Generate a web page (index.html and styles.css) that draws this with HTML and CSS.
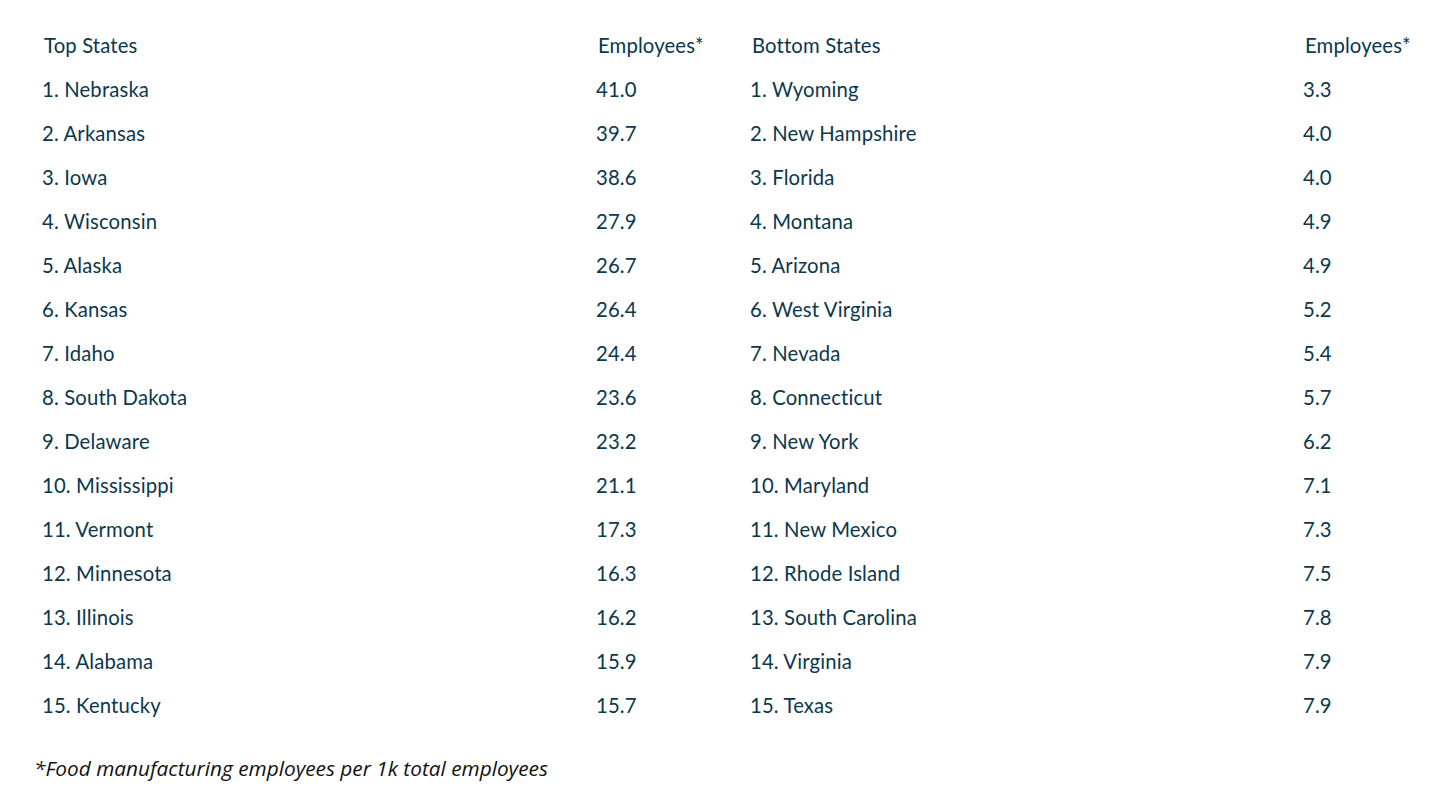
FILE: index.html
```html
<!DOCTYPE html>
<html lang="en">
<head>
<meta charset="utf-8">
<title>Food manufacturing employees by state</title>
<link rel="stylesheet" href="styles.css">
</head>
<body>
<div class="page">
  <div class="tables">
    <table class="rank rank-top">
      <thead>
        <tr><th class="name">Top States</th><th class="val">Employees*</th></tr>
      </thead>
      <tbody>
        <tr><td class="name">1. Nebraska</td><td class="val">41.0</td></tr>
        <tr><td class="name">2. Arkansas</td><td class="val">39.7</td></tr>
        <tr><td class="name">3. Iowa</td><td class="val">38.6</td></tr>
        <tr><td class="name">4. Wisconsin</td><td class="val">27.9</td></tr>
        <tr><td class="name">5. Alaska</td><td class="val">26.7</td></tr>
        <tr><td class="name">6. Kansas</td><td class="val">26.4</td></tr>
        <tr><td class="name">7. Idaho</td><td class="val">24.4</td></tr>
        <tr><td class="name">8. South Dakota</td><td class="val">23.6</td></tr>
        <tr><td class="name">9. Delaware</td><td class="val">23.2</td></tr>
        <tr><td class="name">10. Mississippi</td><td class="val">21.1</td></tr>
        <tr><td class="name">11. Vermont</td><td class="val">17.3</td></tr>
        <tr><td class="name">12. Minnesota</td><td class="val">16.3</td></tr>
        <tr><td class="name">13. Illinois</td><td class="val">16.2</td></tr>
        <tr><td class="name">14. Alabama</td><td class="val">15.9</td></tr>
        <tr><td class="name">15. Kentucky</td><td class="val">15.7</td></tr>
      </tbody>
    </table>
    <table class="rank rank-bottom">
      <thead>
        <tr><th class="name">Bottom States</th><th class="val">Employees*</th></tr>
      </thead>
      <tbody>
        <tr><td class="name">1. Wyoming</td><td class="val">3.3</td></tr>
        <tr><td class="name">2. New Hampshire</td><td class="val">4.0</td></tr>
        <tr><td class="name">3. Florida</td><td class="val">4.0</td></tr>
        <tr><td class="name">4. Montana</td><td class="val">4.9</td></tr>
        <tr><td class="name">5. Arizona</td><td class="val">4.9</td></tr>
        <tr><td class="name">6. West Virginia</td><td class="val">5.2</td></tr>
        <tr><td class="name">7. Nevada</td><td class="val">5.4</td></tr>
        <tr><td class="name">8. Connecticut</td><td class="val">5.7</td></tr>
        <tr><td class="name">9. New York</td><td class="val">6.2</td></tr>
        <tr><td class="name">10. Maryland</td><td class="val">7.1</td></tr>
        <tr><td class="name">11. New Mexico</td><td class="val">7.3</td></tr>
        <tr><td class="name">12. Rhode Island</td><td class="val">7.5</td></tr>
        <tr><td class="name">13. South Carolina</td><td class="val">7.8</td></tr>
        <tr><td class="name">14. Virginia</td><td class="val">7.9</td></tr>
        <tr><td class="name">15. Texas</td><td class="val">7.9</td></tr>
      </tbody>
    </table>
  </div>
  <p class="footnote">*Food manufacturing employees per 1k total employees</p>
</div>
</body>
</html>
```

FILE: styles.css
```css
html, body {
  margin: 0;
  padding: 0;
  background: #ffffff;
}

.page {
  padding: 23px 0 0 42px;
  width: 1450px;
  box-sizing: border-box;
}

.tables {
  display: flex;
}

.rank {
  border-collapse: collapse;
  table-layout: fixed;
  font-family: Lato, "Liberation Sans", sans-serif;
  font-size: 20.3px;
  letter-spacing: 0.15px;
  color: #0a384d;
}

.rank-top {
  width: 708px;
}

.rank-bottom {
  width: 700px;
}

.rank th,
.rank td {
  padding: 0;
  height: 44px;
  line-height: 44px;
  text-align: left;
  font-weight: 400;
  white-space: nowrap;
}

.rank th {
  padding-left: 2px;
}

.rank-top .name {
  width: 552px;
}

.rank-bottom .name {
  width: 551px;
}

.footnote {
  margin: 28px 0 0 -8px;
  font-family: "Open Sans", "Liberation Sans", sans-serif;
  font-style: italic;
  font-size: 20.8px;
  line-height: 26px;
  color: #111111;
}
```
